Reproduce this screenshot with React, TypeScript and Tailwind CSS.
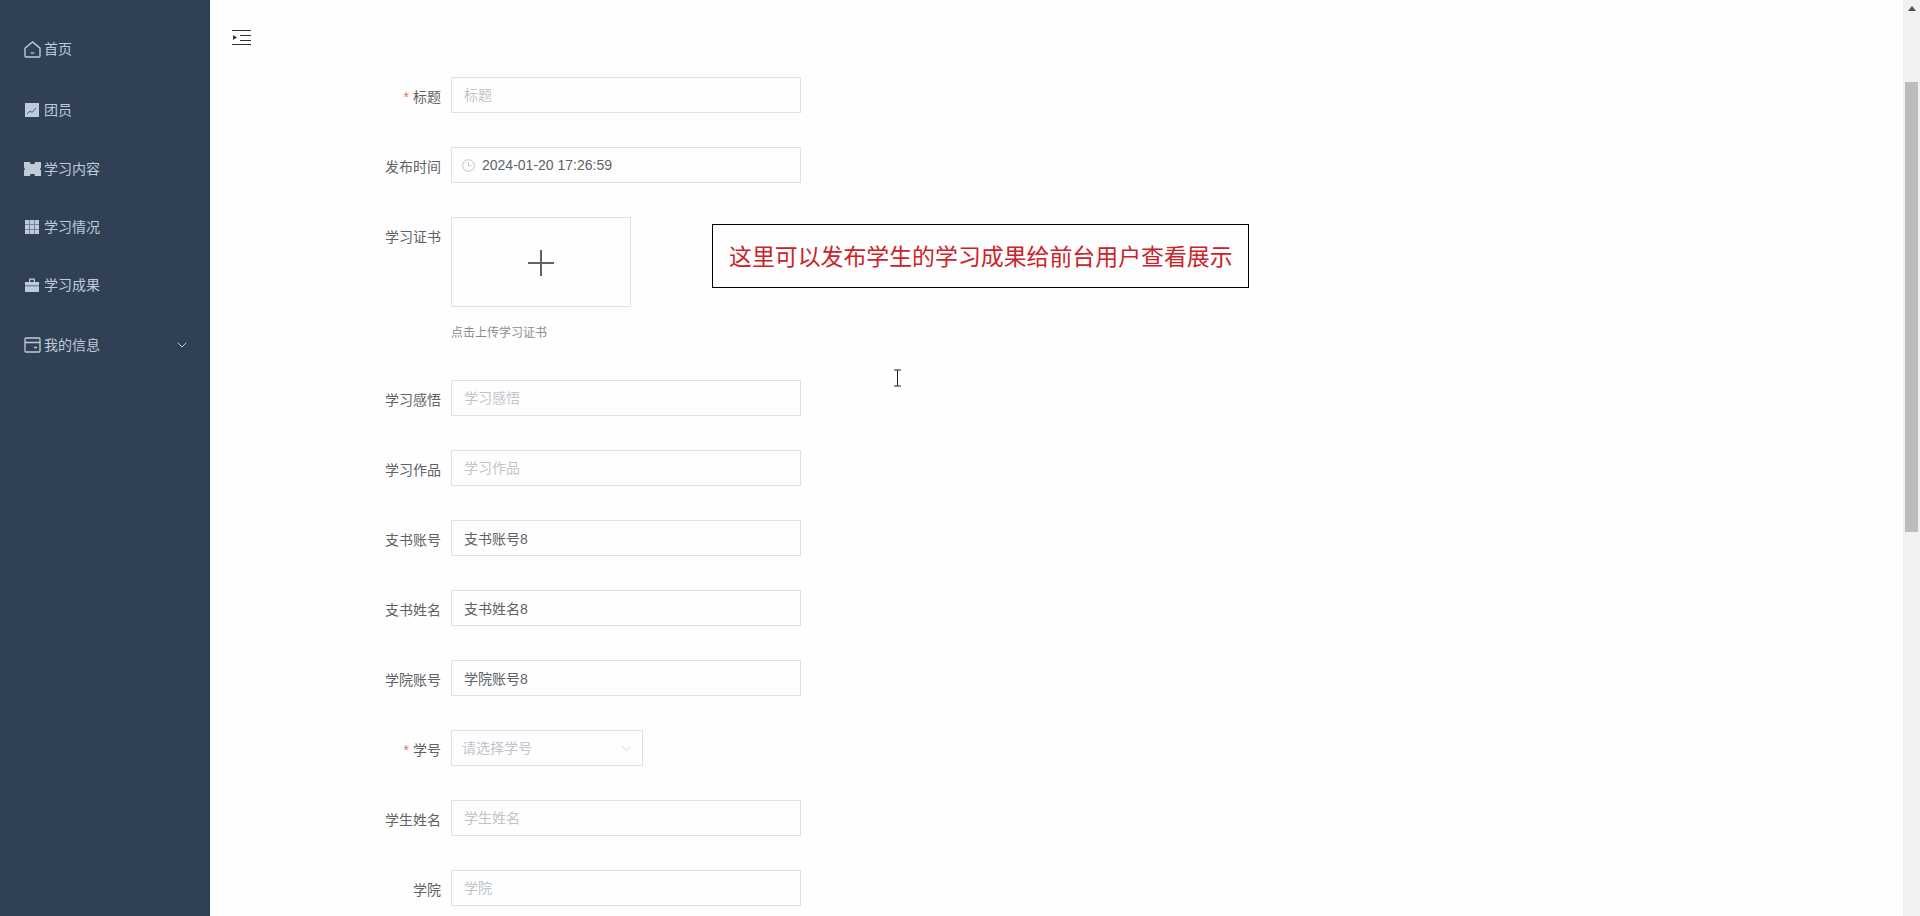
import { ChevronDown } from "lucide-react";
import type { ReactNode } from "react";

const HomeIcon = () => (
  <svg width="17" height="17" viewBox="0 0 17 17" fill="none" stroke="#bfcbd9" strokeWidth="1.4">
    <path d="M1 7.200 8.500 1 16 7.200V15a1 1 0 0 1-1 1H2a1 1 0 0 1-1-1Z" />
    <path d="M6.800 11.500c.8.8 2.600.8 3.400 0" />
  </svg>
);

const ChartIcon = () => (
  <svg width="16" height="16" viewBox="0 0 16 16">
    <rect x="1" y="1" width="14" height="14" fill="#bfcbd9" />
    <path d="M3 12 6 9l2 1.500L12 6" fill="none" stroke="#4a5a70" strokeWidth="1" />
  </svg>
);

const TicketIcon = () => (
  <svg width="17" height="14" viewBox="0 0 17 14">
    <path d="M0 0h6l.5 2h4l.5-2h6v5.500L16 7l1 1.500V14h-6l-.5-2h-4L6 14H0V8.500L1 7 0 5.500Z" fill="#bfcbd9" />
  </svg>
);

const GridIcon = () => (
  <svg width="16" height="16" viewBox="0 0 16 16" fill="#bfcbd9">
    <rect x="1" y="1" width="4.400" height="4.400" />
    <rect x="5.800" y="1" width="4.400" height="4.400" />
    <rect x="10.600" y="1" width="4.400" height="4.400" />
    <rect x="1" y="5.800" width="4.400" height="4.400" />
    <rect x="5.800" y="5.800" width="4.400" height="4.400" />
    <rect x="10.600" y="5.800" width="4.400" height="4.400" />
    <rect x="1" y="10.600" width="4.400" height="4.400" />
    <rect x="5.800" y="10.600" width="4.400" height="4.400" />
    <rect x="10.600" y="10.600" width="4.400" height="4.400" />
  </svg>
);

const CaseIcon = () => (
  <svg width="16" height="16" viewBox="0 0 16 16" fill="#bfcbd9">
    <path d="M5 5V1.500h6V5H9.700V2.800H6.300V5Z" />
    <rect x="1" y="5" width="14" height="3.500" />
    <rect x="1" y="9.200" width="14" height="5.800" />
  </svg>
);

const CardIcon = () => (
  <svg width="17" height="16" viewBox="0 0 17 16" fill="none" stroke="#bfcbd9" strokeWidth="1.3">
    <rect x="1" y="1" width="15" height="14" rx="1" />
    <path d="M1 5.500h15M10 10.500h3" />
  </svg>
);

const ToggleIcon = () => (
  <svg width="20" height="17" viewBox="0 0 20 17" fill="none" stroke="#333" strokeWidth="1.2">
    <path d="M0 1.500h19M8 6.500h11M8 11.500h11M0 15.500h19" />
    <path d="M1 6l4 2.500-4 2.500Z" fill="#333" stroke="none" />
  </svg>
);

const ClockIcon = () => (
  <svg width="13" height="13" viewBox="0 0 13 13" fill="none" stroke="#c0c4cc" strokeWidth="1">
    <circle cx="6.500" cy="6.500" r="5.800" />
    <path d="M6.500 3v3.700h3" />
  </svg>
);

const menu = [
  { label: "首页", icon: <HomeIcon />, height: "h-[60px]" },
  { label: "团员", icon: <ChartIcon />, height: "h-[62px]" },
  { label: "学习内容", icon: <TicketIcon />, height: "h-[56px]" },
  { label: "学习情况", icon: <GridIcon />, height: "h-[59px]" },
  { label: "学习成果", icon: <CaseIcon />, height: "h-[58px]" },
  { label: "我的信息", icon: <CardIcon />, height: "h-[62px]", arrow: true },
];

const inputClass =
  "w-[350px] h-9 border border-[#dfe1e4] bg-transparent px-3 text-sm text-[#606266] outline-none placeholder:text-[#c0c4cc]";

const FormRow = ({
  label,
  required,
  children,
}: {
  label: string;
  required?: boolean;
  children: ReactNode;
}) => (
  <div className="flex mb-[34px]">
    <label className="h-9 w-[241px] pr-2.5 text-right text-sm leading-[40px] text-[#606266]">
      {required && <span className="mr-1 text-[#f56c6c]">*</span>}
      {label}
    </label>
    {children}
  </div>
);

export default function App() {
  return (
    <div className="relative flex h-[916px] overflow-hidden bg-[#fefefe] font-['Liberation_Sans','Noto_Sans_CJK_SC',sans-serif]">
      {/* Sidebar */}
      <aside className="w-[210px] shrink-0 bg-[#304156] pt-[19px]">
        {menu.map((item) => (
          <div
            key={item.label}
            className={`flex items-center pl-6 pr-5 text-sm text-[#bfcbd9] ${item.height}`}
          >
            <span className="flex w-5 shrink-0 items-center">{item.icon}</span>
            <span className="flex-1">{item.label}</span>
            {item.arrow && <ChevronDown size={16} strokeWidth={1.5} />}
          </div>
        ))}
      </aside>

      {/* Main */}
      <main className="flex-1">
        <div className="h-[77px] pl-[22px] pt-[29px]">
          <ToggleIcon />
        </div>

        <form>
          <FormRow label="标题" required>
            <input className={inputClass} placeholder="标题" />
          </FormRow>

          <FormRow label="发布时间">
            <div className="flex h-9 w-[350px] items-center border border-[#dfe1e4] pl-[10px] text-sm text-[#606266]">
              <ClockIcon />
              <span className="ml-[7px]">2024-01-20 17:26:59</span>
            </div>
          </FormRow>

          <div className="relative">
            <FormRow label="学习证书">
              <div className="h-[129px]">
                <div className="flex h-[90px] w-[180px] items-center justify-center border border-[#dfe1e4]">
                  <svg width="28" height="28" viewBox="0 0 28 28" stroke="#606266" strokeWidth="2">
                    <path d="M14 2v26M1 15h26" />
                  </svg>
                </div>
                <div className="mt-4 text-xs leading-[20px] text-[#8a8d93]">点击上传学习证书</div>
              </div>
            </FormRow>
            {/* annotation box over the form */}
            <div className="absolute left-[502px] top-[7px] flex h-[64px] w-[537px] items-center whitespace-nowrap border border-black pb-[2px] pl-[16px] font-['Noto_Sans_CJK_SC',sans-serif] text-[22.9px] text-[#cc2229]">
              这里可以发布学生的学习成果给前台用户查看展示
            </div>
          </div>

          <FormRow label="学习感悟">
            <input className={inputClass} placeholder="学习感悟" />
          </FormRow>
          <FormRow label="学习作品">
            <input className={inputClass} placeholder="学习作品" />
          </FormRow>
          <FormRow label="支书账号">
            <input className={inputClass} defaultValue="支书账号8" />
          </FormRow>
          <FormRow label="支书姓名">
            <input className={inputClass} defaultValue="支书姓名8" />
          </FormRow>
          <FormRow label="学院账号">
            <input className={inputClass} defaultValue="学院账号8" />
          </FormRow>

          <FormRow label="学号" required>
            <div className="flex h-9 w-[192px] items-center justify-between border border-[#dfe1e4] pl-[10px] pr-2 text-sm text-[#c0c4cc]">
              <span>请选择学号</span>
              <ChevronDown size={15} strokeWidth={1.25} />
            </div>
          </FormRow>

          <FormRow label="学生姓名">
            <input className={inputClass} placeholder="学生姓名" />
          </FormRow>
          <FormRow label="学院">
            <input className={inputClass} placeholder="学院" />
          </FormRow>
        </form>
      </main>

      {/* Scrollbar */}
      <div className="w-[17px] shrink-0 bg-[#f1f1f1] pt-[6px]">
        <div className="mx-auto h-0 w-0 border-x-4 border-b-[5px] border-x-transparent border-b-[#505050]" />
        <div className="ml-[2px] mt-[71px] h-[450px] w-[13px] bg-[#bcbcbc]" />
      </div>

      {/* Text cursor caught in the capture */}
      <svg
        className="absolute left-[893px] top-[369px]"
        width="9"
        height="18"
        viewBox="0 0 9 18"
        fill="none"
        stroke="#222"
        strokeWidth="1"
      >
        <path d="M1 1h7M4.500 1v16M1 17h7" />
      </svg>
    </div>
  );
}
